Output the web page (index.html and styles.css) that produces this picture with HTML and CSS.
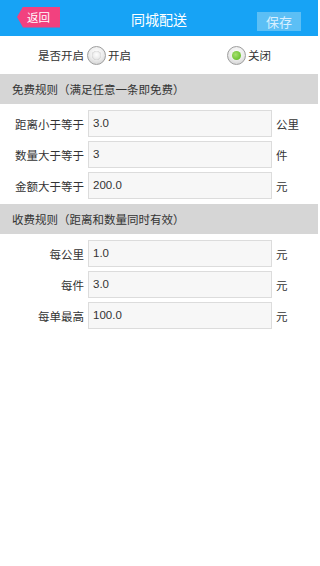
FILE: index.html
```html
<!DOCTYPE html>
<html lang="zh">
<head>
<meta charset="utf-8">
<title>同城配送</title>
<link rel="stylesheet" href="styles.css">
</head>
<body>
<div class="page">
  <header class="topbar">
    <div class="back">返回</div>
    <div class="title">同城配送</div>
    <div class="save">保存</div>
  </header>

  <div class="switch-row">
    <div class="label">是否开启</div>
    <div class="option opt-on"><span class="radio"></span><span>开启</span></div>
    <div class="option opt-off"><span class="radio checked"></span><span>关闭</span></div>
  </div>

  <div class="section">免费规则（满足任意一条即免费）</div>
  <div class="form">
    <div class="label">距离小于等于</div><div class="input">3.0</div><div class="unit">公里</div>
    <div class="label">数量大于等于</div><div class="input">3</div><div class="unit">件</div>
    <div class="label">金额大于等于</div><div class="input">200.0</div><div class="unit">元</div>
  </div>

  <div class="section">收费规则（距离和数量同时有效）</div>
  <div class="form">
    <div class="label">每公里</div><div class="input">1.0</div><div class="unit">元</div>
    <div class="label">每件</div><div class="input">3.0</div><div class="unit">元</div>
    <div class="label">每单最高</div><div class="input">100.0</div><div class="unit">元</div>
  </div>
</div>
</body>
</html>
```
FILE: styles.css
```css
* { box-sizing: border-box; }
html, body { margin: 0; padding: 0; background: #fff; }
body {
  font-family: "Noto Sans CJK SC", "Liberation Sans", sans-serif;
  font-size: 11.5px;
  color: #333;
}
.page { width: 318px; min-height: 566px; background: #fff; }

.topbar {
  height: 36px;
  background: #17a3f5;
  display: flex;
  align-items: center;
  justify-content: space-between;
  padding: 0 17px 0 17px;
  position: relative;
}
.back {
  height: 21px;
  width: 43px;
  margin-top: -2px;
  background: #f2417f;
  color: #fff;
  font-size: 11.5px;
  line-height: 21px;
  padding-left: 10px;
  clip-path: polygon(6px 0, 100% 0, 100% 100%, 6px 100%, 0 50%);
}
.title {
  position: absolute;
  left: 0; right: 0; top: 0;
  text-align: center;
  line-height: 38px;
  font-size: 14px;
  color: #fff;
  pointer-events: none;
}
.save {
  height: 19px;
  width: 44px;
  margin-top: 7px;
  background: #5cbff5;
  color: #d8efff;
  font-size: 13px;
  line-height: 19px;
  text-align: center;
}

.switch-row {
  height: 38px;
  display: flex;
  align-items: center;
}
.switch-row .label { width: 84px; text-align: right; }
.option { display: flex; align-items: center; }
.opt-on { margin-left: 3px; width: 140px; }
.radio {
  width: 19px; height: 19px;
  border-radius: 50%;
  border: 1px solid #9e9e9e;
  background: radial-gradient(circle at 50% 35%, #ffffff 0, #ececec 50%, #c8c8c8 100%);
  display: inline-flex;
  align-items: center;
  justify-content: center;
  margin-right: 2px;
}
.radio::after {
  content: "";
  width: 9px; height: 9px; border-radius: 50%;
  background: radial-gradient(circle at 50% 40%, #fdfdfd 0, #dedede 100%);
  box-shadow: inset 0 0 1px #aaa;
}
.radio.checked::after {
  background: radial-gradient(circle at 40% 40%, #a8e070 0, #6cc232 70%);
  box-shadow: none;
}

.section {
  height: 30px;
  background: #d6d6d6;
  line-height: 30px;
  padding-left: 12px;
  color: #333;
}
.form {
  display: grid;
  grid-template-columns: 84px 184px auto;
  column-gap: 4px;
  row-gap: 4px;
  padding: 6px 0 5px 0;
  align-items: center;
}
.form .label { text-align: right; }
.input {
  height: 27px;
  border: 1px solid #dcdcdc;
  background: #f7f7f7;
  line-height: 25px;
  padding-left: 4px;
  font-family: "Liberation Sans", "Noto Sans CJK SC", sans-serif;
  font-size: 11.5px;
  color: #333;
}
.unit { color: #333; }
```
